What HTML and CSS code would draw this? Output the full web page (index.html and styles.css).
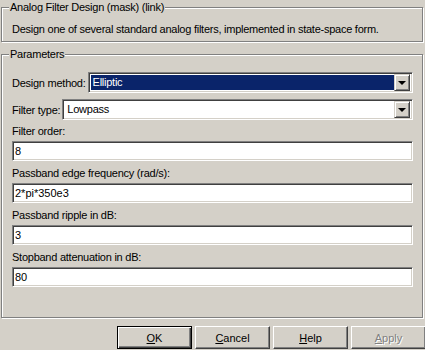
FILE: index.html
```html
<!DOCTYPE html>
<html lang="en">
<head>
  <meta charset="UTF-8">
  <title>Block Parameters: Analog Filter Design</title>
  <link rel="stylesheet" href="styles.css">
</head>
<body>
  <fieldset class="group info">
    <legend>Analog Filter Design (mask) (link)</legend>
    <p class="desc">Design one of several standard analog filters, implemented in state-space form.</p>
  </fieldset>

  <fieldset class="group params">
    <legend>Parameters</legend>

    <div class="combo-row">
      <label>Design method:</label>
      <div class="combo focused">
        <span class="combo-text">Elliptic</span>
        <span class="combo-btn"><span class="tri"></span></span>
      </div>
    </div>

    <div class="combo-row last">
      <label>Filter type:</label>
      <div class="combo">
        <span class="combo-text">Lowpass</span>
        <span class="combo-btn"><span class="tri"></span></span>
      </div>
    </div>

    <div class="field">
      <label>Filter order:</label>
      <input class="edit" type="text" value="8">
    </div>
    <div class="field">
      <label>Passband edge frequency (rad/s):</label>
      <input class="edit" type="text" value="2*pi*350e3">
    </div>
    <div class="field">
      <label>Passband ripple in dB:</label>
      <input class="edit" type="text" value="3">
    </div>
    <div class="field">
      <label>Stopband attenuation in dB:</label>
      <input class="edit" type="text" value="80">
    </div>
  </fieldset>

  <div class="buttons">
    <button class="btn default"><u>O</u>K</button>
    <button class="btn"><u>C</u>ancel</button>
    <button class="btn"><u>H</u>elp</button>
    <button class="btn" disabled><u>A</u>pply</button>
  </div>
</body>
</html>
```

FILE: styles.css
```css
body {
  margin: 0;
  padding: 0;
  background: #d4d0c8;
  font-family: "Liberation Sans", Arial, sans-serif;
  font-size: 11px;
  letter-spacing: -0.25px;
  color: #000;
  overflow: hidden;
}

.group {
  margin: 0 2px 0 1px;
  padding: 0 9px 0 10px;
  border: 1px solid #808080;
  box-shadow: 1px 1px 0 #fff, inset 1px 1px 0 #fff;
  min-width: 0;
}

.group legend {
  padding: 0 1px;
  margin-left: -3px;
  line-height: 14px;
  background: #d4d0c8;
}

.info {
  padding-top: 9px;
  padding-bottom: 5px;
}

.desc {
  margin: 0;
  line-height: 13px;
}

.params {
  margin-top: 5px;
  padding-top: 11px;
  padding-bottom: 30px;
}

.combo-row {
  display: flex;
  align-items: center;
  gap: 2px;
  margin-bottom: 6px;
}

.combo-row.last {
  margin-bottom: 5px;
}

.combo {
  flex: 1;
  height: 21px;
  box-sizing: border-box;
  display: flex;
  align-items: center;
  padding: 2px;
  background: #fff;
  border: 1px solid;
  border-color: #808080 #fff #fff #808080;
  box-shadow: inset 1px 1px 0 #404040, inset -1px -1px 0 #d4d0c8;
}

.combo-text {
  flex: 1;
  height: 15px;
  line-height: 15px;
  padding-left: 2px;
}

.combo.focused .combo-text {
  background: #0a246a;
  color: #fff;
}

.combo-btn {
  width: 16px;
  height: 17px;
  box-sizing: border-box;
  background: #d4d0c8;
  border: 1px solid;
  border-color: #d4d0c8 #404040 #404040 #d4d0c8;
  box-shadow: inset 1px 1px 0 #fff, inset -1px -1px 0 #808080;
  display: flex;
  align-items: center;
  justify-content: center;
}

.tri {
  width: 0;
  height: 0;
  border-left: 4px solid transparent;
  border-right: 4px solid transparent;
  border-top: 4px solid #000;
  margin-top: 1px;
}

.field label {
  display: block;
  line-height: 13px;
  margin-bottom: 3px;
}

.field {
  margin-bottom: 6px;
}

.field:last-child {
  margin-bottom: 0;
}

.edit {
  display: block;
  width: 100%;
  height: 20px;
  box-sizing: border-box;
  margin: 0;
  padding: 0 2px;
  font: inherit;
  color: #000;
  background: #fff;
  border: 1px solid;
  border-color: #808080 #fff #fff #808080;
  box-shadow: inset 1px 1px 0 #404040, inset -1px -1px 0 #d4d0c8;
  outline: none;
}

.buttons {
  display: flex;
  justify-content: flex-end;
  gap: 3px;
  margin-top: 8px;
  margin-right: -1px;
}

.btn {
  width: 75px;
  height: 23px;
  box-sizing: border-box;
  padding: 0;
  font: inherit;
  color: #000;
  background: #d4d0c8;
  border: 1px solid;
  border-color: #fff #404040 #404040 #fff;
  box-shadow: inset -1px -1px 0 #808080, inset 1px 1px 0 #d4d0c8;
}

.btn.default {
  border: 1px solid #000;
  box-shadow: inset 1px 1px 0 #fff, inset -1px -1px 0 #404040, inset -2px -2px 0 #808080;
}

.btn:disabled {
  color: #808080;
  text-shadow: 1px 1px 0 #fff;
}
```
